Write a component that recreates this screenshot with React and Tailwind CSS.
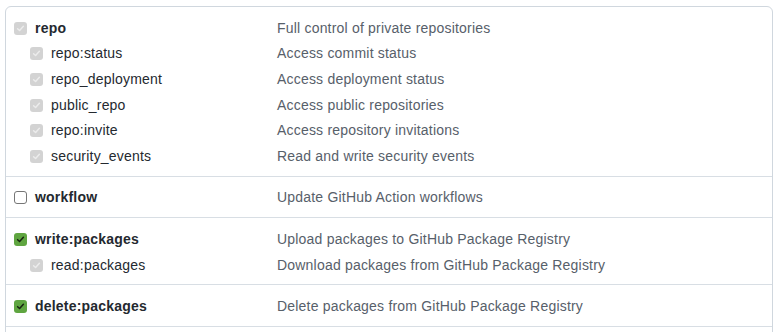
import React from "react";

function Box({ state }) {
  if (state === "disabled") {
    return (
      <span className="flex h-[13px] w-[13px] shrink-0 items-center justify-center rounded-[3px] bg-[#d3d3d3]">
        <svg width="9" height="9" viewBox="0 0 10 10" fill="none">
          <path d="M1.8 5.2 L4 7.3 L8.2 2.6" stroke="#ececec" strokeWidth="1.6" strokeLinecap="round" strokeLinejoin="round" />
        </svg>
      </span>
    );
  }
  if (state === "checked") {
    return (
      <span className="flex h-[13px] w-[13px] shrink-0 items-center justify-center rounded-[3px] bg-[#5fa540]">
        <svg width="9" height="9" viewBox="0 0 10 10" fill="none">
          <path d="M1.8 5.2 L4 7.3 L8.2 2.6" stroke="#17240f" strokeWidth="1.7" strokeLinecap="round" strokeLinejoin="round" />
        </svg>
      </span>
    );
  }
  return <span className="h-[13px] w-[13px] shrink-0 rounded-[3px] border border-[#767676] bg-white" />;
}

function Row({ name, desc, state, sub, bold }) {
  return (
    <div className="flex h-[25.6px] items-center">
      <div className={`flex w-[271px] shrink-0 items-center gap-2 ${sub ? "pl-6" : "pl-2"}`}>
        <span className="flex">
          <Box state={state} />
        </span>
        <span className={`${bold ? "font-bold" : ""} text-[#24292f]`}>{name}</span>
      </div>
      <div className="text-[#57606a]">{desc}</div>
    </div>
  );
}

const groups = [
  [
    { name: "repo", desc: "Full control of private repositories", state: "disabled", bold: true },
    { name: "repo:status", desc: "Access commit status", state: "disabled", sub: true },
    { name: "repo_deployment", desc: "Access deployment status", state: "disabled", sub: true },
    { name: "public_repo", desc: "Access public repositories", state: "disabled", sub: true },
    { name: "repo:invite", desc: "Access repository invitations", state: "disabled", sub: true },
    { name: "security_events", desc: "Read and write security events", state: "disabled", sub: true },
  ],
  [{ name: "workflow", desc: "Update GitHub Action workflows", state: "unchecked", bold: true }],
  [
    { name: "write:packages", desc: "Upload packages to GitHub Package Registry", state: "checked", bold: true },
    { name: "read:packages", desc: "Download packages from GitHub Package Registry", state: "disabled", sub: true },
  ],
  [{ name: "delete:packages", desc: "Delete packages from GitHub Package Registry", state: "checked", bold: true }],
];

export default function App() {
  return (
    <div className="h-[332px] w-[780px] overflow-hidden bg-white pl-[5px] pt-[6px] text-[14px] leading-[21px] tracking-[0.2px]" style={{ fontFamily: '"Liberation Sans", Arial, sans-serif' }}>
      <div className="w-[768px] rounded-t-md border border-[#d0d7de]">
        {groups.map((g, i) => (
          <div key={i} className={`pb-[6.5px] pt-[8.5px] ${i > 0 ? "border-t border-[#d8dee4]" : ""}`}>
            {g.map((r) => (
              <Row key={r.name} {...r} />
            ))}
          </div>
        ))}
        <div className="h-[40px] border-t border-[#d8dee4]" />
      </div>
    </div>
  );
}
